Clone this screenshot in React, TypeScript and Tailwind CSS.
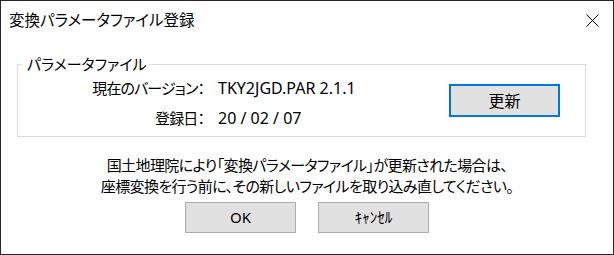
import { useState } from 'react';

export default function App() {
  const [focused] = useState('update');

  return (
    <div className="w-[614px] h-[255px] bg-white border border-[#262626] flex flex-col text-black text-[15px] font-['Noto_Sans','Noto_Sans_CJK_JP',sans-serif] [font-feature-settings:'palt']">
      {/* Title bar */}
      <div className="h-[39px] flex items-center justify-between pl-[8px] pr-[14px]">
        <span className="leading-none text-[15.5px]">変換パラメータファイル登録</span>
        <svg width="13" height="13" viewBox="0 0 13 13" className="text-black">
          <path d="M0.5 0.5 L12.5 12.5 M12.5 0.5 L0.5 12.5" stroke="currentColor" strokeWidth="1" fill="none" />
        </svg>
      </div>

      {/* Parameter file group */}
      <fieldset className="mt-[14px] ml-[16px] w-[569px] border border-[#dcdcdc] min-w-0">
        <legend className="ml-[4px] pl-[5px] pr-[2px] leading-[20px]">パラメータファイル</legend>
        <div className="flex">
          <div className="-mt-[1px] grid grid-cols-[186px_1fr] gap-x-[14px] auto-rows-[30px] items-center">
            <span className="text-right tracking-[-0.9px]">現在のバージョン：</span>
            <span className="text-[16px]">TKY2JGD.PAR 2.1.1</span>
            <span className="text-right tracking-[-0.9px]">登録日：</span>
            <span className="text-[16px]">20 / 02 / 07</span>
          </div>
          <button
            className={`ml-auto mr-[25px] mt-[10px] mb-[19px] w-[111px] h-[33px] bg-[#e1e1e1] text-[16px] ${
              focused === 'update' ? 'border-2 border-[#0078d7]' : 'border border-[#adadad]'
            }`}
          >
            更新
          </button>
        </div>
      </fieldset>

      {/* Message */}
      <div className="mt-[18px] flex flex-col items-center leading-[21px] tracking-[-0.6px]">
        <p>国土地理院により「変換パラメータファイル」が更新された場合は、</p>
        <p>座標変換を行う前に、その新しいファイルを取り込み直してください。</p>
      </div>

      {/* Actions */}
      <div className="mt-[5px] flex justify-center gap-[22px]">
        <button className="w-[111px] h-[31px] bg-[#e1e1e1] border border-[#adadad]">OK</button>
        <button className="w-[111px] h-[31px] bg-[#e1e1e1] border border-[#adadad]">ｷｬﾝｾﾙ</button>
      </div>
    </div>
  );
}
